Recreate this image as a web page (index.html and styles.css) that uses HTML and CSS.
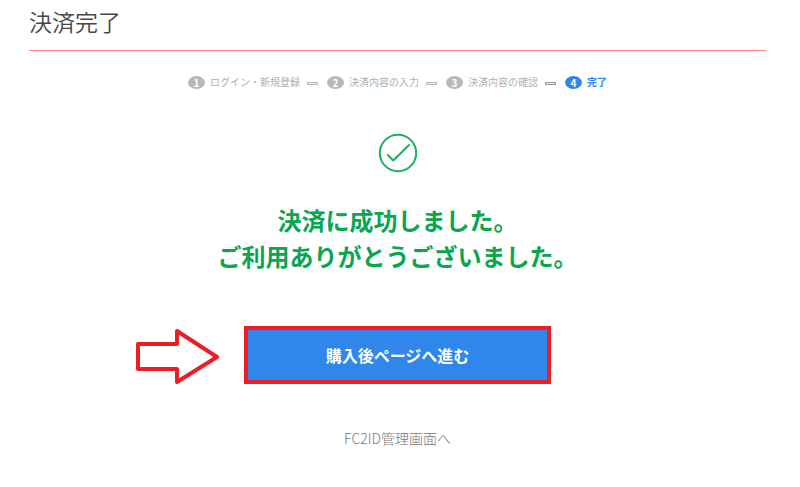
FILE: index.html
```html
<!DOCTYPE html>
<html lang="ja">
<head>
  <meta charset="UTF-8" />
  <meta name="viewport" content="width=device-width, initial-scale=1.0"/>
  <title>決済完了</title>
  <link rel="stylesheet" href="styles.css">
</head>
<body>

  <main class="page">
    <h1 class="title">決済完了</h1>

    <ol class="steps">
      <li class="step"><span class="num">1</span>ログイン・新規登録</li>
      <li class="step"><span class="num">2</span>決済内容の入力</li>
      <li class="step"><span class="num">3</span>決済内容の確認</li>
      <li class="step active"><span class="num">4</span>完了</li>
    </ol>

    <!-- Result -->
    <svg class="check" viewBox="0 0 40 40" aria-hidden="true">
      <circle cx="20" cy="20" r="18.2"/>
      <path d="M9.8 22 L15.3 27.5 L31 12"/>
    </svg>
    <p class="message">決済に成功しました。<br>ご利用ありがとうございました。</p>

    <div class="action">
      <svg class="arrow" viewBox="0 0 84 58" aria-hidden="true">
        <path d="M3 16 H42 V3 L82 29 L42 54 V41 H3 Z"/>
      </svg>
      <button type="button" class="next-button">購入後ページへ進む</button>
    </div>

    <a class="admin-link" href="#">FC2ID管理画面へ</a>
  </main>

</body>
</html>
```

FILE: styles.css
```css
*,*::after{box-sizing:border-box}
body{margin:0;background:#fff;color:#555;font-family:"Noto Sans CJK JP",sans-serif}
.page{display:flex;flex-direction:column;align-items:center;padding:3px 34px 24px 29px}
.title{align-self:stretch;margin:0;padding-bottom:11px;border-bottom:1px solid #ff8087;font-size:23px;font-weight:350;line-height:36px;color:#484848}
.steps{display:flex;align-items:center;margin:23px 0 0;padding:0;list-style:none;font-size:10px;line-height:16px;color:#b0b0b0}
.step{display:flex;align-items:center;white-space:nowrap}
.step:not(:last-child)::after{content:"";width:11px;height:3px;margin:2px 9px 0 7px;border:1px solid #bbb;background:#eee}
.step:nth-child(3)::after{border-color:#999}
.num{width:17px;height:13px;margin-right:5px;border-radius:50%;background:#b8b8b8;color:#fff;font-weight:bold;line-height:13px;text-align:center}
.step.active{color:#2f86eb;font-weight:bold}
.step.active .num{background:#2f86eb}
.check{width:40px;height:40px;margin-top:43px;fill:none;stroke:#1fae5e;stroke-width:2;stroke-linecap:round;stroke-linejoin:round}
.message{margin:29px 0 0;font-size:24px;font-weight:bold;line-height:36px;text-align:center;color:#08a650}
.action{position:relative;width:100%;max-width:307px;margin-top:52px}
.next-button{display:block;width:100%;padding:13px 16px;border:4px solid #ee1c25;border-radius:0;background:#2f86eb;color:#fff;font-family:inherit;font-size:16px;font-weight:bold;line-height:24px;cursor:pointer}
.arrow{position:absolute;top:2px;right:100%;width:84px;height:58px;margin-right:25px;fill:#fff;stroke:#ee1c25;stroke-width:4;stroke-linejoin:round}
.admin-link{margin-top:43px;font-size:14px;font-weight:300;line-height:22px;color:#777;text-decoration:none}
```
